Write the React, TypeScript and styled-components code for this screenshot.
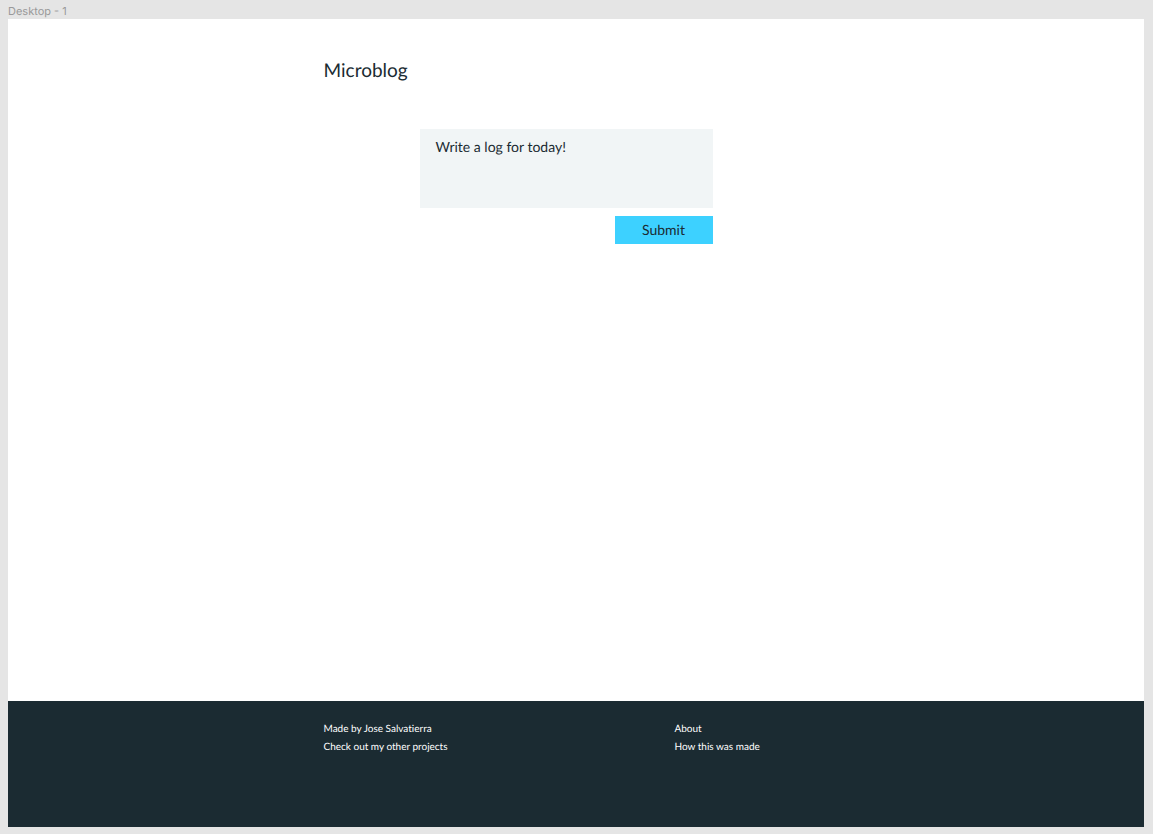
import React from "react";
import styled, { createGlobalStyle } from "styled-components";

const GlobalStyle = createGlobalStyle`
  * { box-sizing: border-box; }
  body {
    margin: 0;
    background: #e5e5e5;
    font-family: Lato, sans-serif;
    font-variant-ligatures: none;
    text-rendering: geometricPrecision;
    color: #1b2b32;
  }
`;

const Canvas = styled.div`
  display: flex;
  flex-direction: column;
  min-height: 100vh;
  padding: 4px 9px 7px 8px;
`;

const FrameLabel = styled.div`
  font: 11px/15px Inter, sans-serif;
  color: #999999;
`;

const Frame = styled.div`
  flex: 1;
  display: flex;
  flex-direction: column;
  background: #ffffff;
`;

const Container = styled.div`
  width: 100%;
  max-width: 505px;
  margin: 0 auto;
`;

const Main = styled.main`
  flex: 1;
  padding-top: 40px;
`;

const Title = styled.h1`
  margin: 0 0 46px;
  font-size: 19px;
  line-height: 24px;
  font-weight: 400;
`;

const LogForm = styled.form`
  display: flex;
  flex-direction: column;
  align-items: flex-end;
  gap: 8px;
  width: 293px;
  margin-left: 96px;
`;

const LogInput = styled.textarea`
  display: block;
  width: 100%;
  height: 79px;
  padding: 10px 16px;
  border: 0;
  border-radius: 0;
  resize: none;
  background: #f1f5f6;
  color: inherit;
  font: 14px/16px Lato, sans-serif;
  text-rendering: inherit;

  &::placeholder {
    color: inherit;
    opacity: 1;
  }
`;

const SubmitButton = styled.button`
  width: 98px;
  height: 28px;
  padding: 0;
  border: 0;
  background: #3dd1ff;
  color: inherit;
  font: 14px/16px Lato, sans-serif;
  text-rendering: inherit;
  cursor: pointer;
`;

const Footer = styled.footer`
  min-height: 126px;
  padding-top: 19px;
  background: #1b2b32;
`;

const FooterColumns = styled(Container)`
  display: grid;
  grid-template-columns: 351px 1fr;
`;

const FooterList = styled.ul`
  margin: 0;
  padding: 0;
  list-style: none;
`;

const FooterItem = styled.li`
  font-size: 10px;
  line-height: 18px;
  color: #ffffff;
  white-space: nowrap;
`;

const FooterLink = styled.a`
  color: inherit;
  text-decoration: none;
`;

export default function App() {
  return (
    <>
      <GlobalStyle />
      <Canvas>
        <FrameLabel>Desktop - 1</FrameLabel>
        <Frame>
          <Main>
            <Container>
              <Title>Microblog</Title>
              <LogForm onSubmit={(event) => event.preventDefault()}>
                <LogInput aria-label="Log entry" placeholder="Write a log for today!" />
                <SubmitButton type="submit">Submit</SubmitButton>
              </LogForm>
            </Container>
          </Main>
          <Footer>
            <FooterColumns>
              <FooterList>
                <FooterItem>Made by Jose Salvatierra</FooterItem>
                <FooterItem>
                  <FooterLink href="#projects">Check out my other projects</FooterLink>
                </FooterItem>
              </FooterList>
              <FooterList>
                <FooterItem>
                  <FooterLink href="#about">About</FooterLink>
                </FooterItem>
                <FooterItem>
                  <FooterLink href="#how">How this was made</FooterLink>
                </FooterItem>
              </FooterList>
            </FooterColumns>
          </Footer>
        </Frame>
      </Canvas>
    </>
  );
}
